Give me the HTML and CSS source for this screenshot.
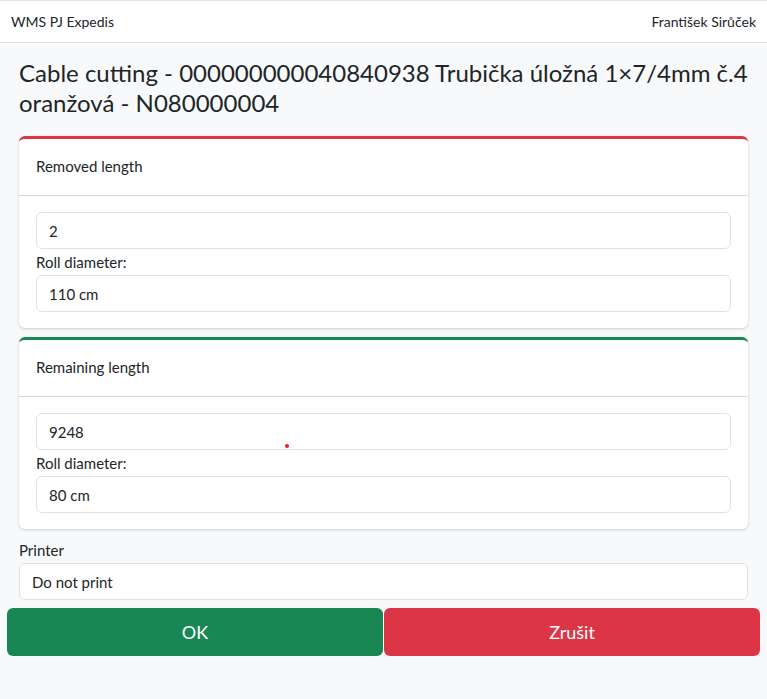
FILE: index.html
```html
<!DOCTYPE html>
<html lang="cs">
<head>
<meta charset="utf-8">
<title>Cable cutting</title>
<link rel="stylesheet" href="styles.css">
</head>
<body>
<header class="topbar">
  <span class="brand">WMS PJ Expedis</span>
  <span class="user">František Sirůček</span>
</header>
<main class="page">
  <h1 class="title">Cable cutting - 000000000040840938 Trubička úložná 1×7/4mm č.4 oranžová - N080000004</h1>

  <section class="card card-red">
    <div class="card-header">Removed length</div>
    <div class="card-body">
      <div class="field">2</div>
      <label class="label">Roll diameter:</label>
      <div class="field">110 cm</div>
    </div>
  </section>

  <section class="card card-green">
    <div class="card-header">Remaining length</div>
    <div class="card-body">
      <div class="field">9248</div>
      <label class="label">Roll diameter:</label>
      <div class="field">80 cm</div>
    </div>
  </section>

  <label class="label printer-label">Printer</label>
  <div class="field select">Do not print</div>

  <div class="actions">
    <button class="btn btn-ok">OK</button>
    <button class="btn btn-cancel">Zrušit</button>
  </div>
</main>
<span class="cursor-dot"></span>
</body>
</html>
```

FILE: styles.css
```css
* { box-sizing: border-box; }
html, body { margin: 0; padding: 0; }
body {
  background: #f8f9fa;
  font-family: "Lato", "Noto Sans", sans-serif;
  color: #212529;
  width: 767px;
  height: 699px;
  position: relative;
}
.topbar {
  height: 43px;
  background: #fff;
  border-top: 1px solid #f3dede;
  border-bottom: 1px solid #dee2e6;
  display: flex;
  justify-content: space-between;
  align-items: center;
  padding: 0 11px 0 11px;
  font-size: 14px;
}
.page {
  padding: 15px 19px 0 19px;
}
.title {
  margin: 0 0 18px 0;
  font-size: 24px;
  font-weight: 400;
  line-height: 30px;
}
.card {
  background: #fff;
  border-radius: 6px;
  box-shadow: 0 1px 3px rgba(0,0,0,0.18);
  margin-bottom: 9px;
  overflow: hidden;
}
.card-red { border-top: 3px solid #dc3545; }
.card-green { border-top: 3px solid #198754; }
.card-header {
  height: 57px;
  border-bottom: 1px solid #d8d8d8;
  display: flex;
  align-items: center;
  padding: 0 17px 2px 17px;
  font-size: 15px;
}
.card-body {
  padding: 16px 17px 16px 17px;
}
.field {
  height: 37px;
  background: #fff;
  border: 1px solid #dee2e6;
  border-radius: 6px;
  display: flex;
  align-items: center;
  padding: 0 12px;
  font-size: 15px;
}
.label {
  display: block;
  font-size: 15px;
  line-height: 26px;
}
.printer-label {
  margin-top: -1px;
}
.select { height: 37px; }
.actions {
  display: flex;
  gap: 1px;
  margin: 8px -12px 0 -12px;
}
.btn {
  flex: 1;
  height: 48px;
  border: none;
  border-radius: 6px;
  color: #fff;
  font-family: inherit;
  font-size: 18px;
}
.btn-ok { background: #198754; }
.btn-cancel { background: #dc3545; }
.cursor-dot {
  position: absolute;
  left: 285px;
  top: 444px;
  width: 4px;
  height: 4px;
  border-radius: 50%;
  background: #e0202a;
}
```
